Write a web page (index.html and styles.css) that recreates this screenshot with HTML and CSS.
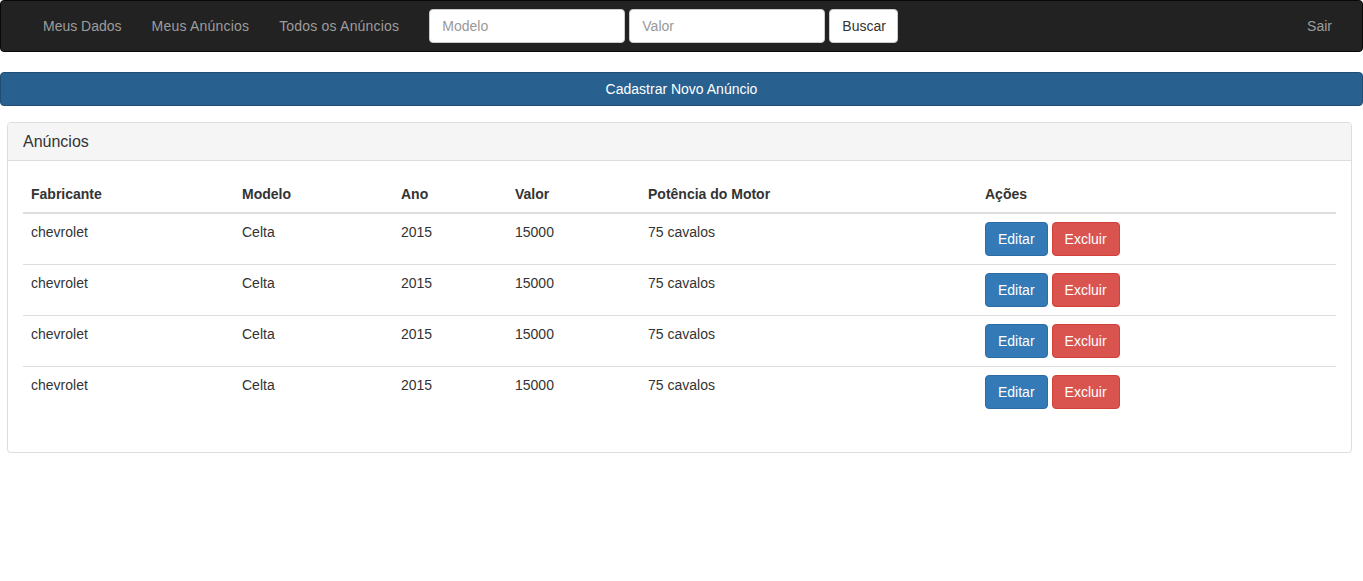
FILE: index.html
```html
<!DOCTYPE html>
<html lang="pt">
<head>
<meta charset="utf-8">
<title>Anúncios</title>
<link rel="stylesheet" href="styles.css">
</head>
<body>
<nav class="navbar">
  <ul class="nav-links">
    <li><a href="#">Meus Dados</a></li>
    <li><a href="#">Meus Anúncios</a></li>
    <li><a href="#">Todos os Anúncios</a></li>
  </ul>
  <form class="nav-search">
    <input class="field" type="text" placeholder="Modelo">
    <input class="field" type="text" placeholder="Valor">
    <button class="btn btn-default" type="button">Buscar</button>
  </form>
  <a class="nav-right" href="#">Sair</a>
</nav>

<button class="btn btn-wide" type="button">Cadastrar Novo Anúncio</button>

<section class="panel">
  <div class="panel-heading">Anúncios</div>
  <div class="panel-body">
    <table class="table">
      <colgroup>
        <col class="c1"><col class="c2"><col class="c3"><col class="c4"><col class="c5"><col class="c6">
      </colgroup>
      <thead>
        <tr><th>Fabricante</th><th>Modelo</th><th>Ano</th><th>Valor</th><th>Potência do Motor</th><th>Ações</th></tr>
      </thead>
      <tbody>
        <tr><td>chevrolet</td><td>Celta</td><td>2015</td><td>15000</td><td>75 cavalos</td><td class="actions"><button class="btn btn-primary">Editar</button><button class="btn btn-danger">Excluir</button></td></tr>
        <tr><td>chevrolet</td><td>Celta</td><td>2015</td><td>15000</td><td>75 cavalos</td><td class="actions"><button class="btn btn-primary">Editar</button><button class="btn btn-danger">Excluir</button></td></tr>
        <tr><td>chevrolet</td><td>Celta</td><td>2015</td><td>15000</td><td>75 cavalos</td><td class="actions"><button class="btn btn-primary">Editar</button><button class="btn btn-danger">Excluir</button></td></tr>
        <tr><td>chevrolet</td><td>Celta</td><td>2015</td><td>15000</td><td>75 cavalos</td><td class="actions"><button class="btn btn-primary">Editar</button><button class="btn btn-danger">Excluir</button></td></tr>
      </tbody>
    </table>
  </div>
</section>
</body>
</html>
```

FILE: styles.css
```css
* { box-sizing: border-box; }
html, body {
  margin: 0;
  padding: 0;
  background: #fff;
  font-family: "Liberation Sans", Arial, Helvetica, sans-serif;
  font-size: 14px;
  line-height: 20px;
  color: #333;
}
.navbar {
  display: flex;
  align-items: center;
  height: 52px;
  background: #222;
  border: 1px solid #080808;
  border-radius: 4px;
  margin-bottom: 20px;
  padding: 0 15px 0 27px;
}
.nav-links {
  display: flex;
  list-style: none;
  margin: 0;
  padding: 0;
}
.nav-links a, .nav-right {
  display: block;
  padding: 15px;
  color: #9d9d9d;
  text-decoration: none;
}
.nav-links li + li a { letter-spacing: 0.2px; }
.nav-search {
  display: flex;
  gap: 4px;
  margin-left: 15px;
}
.field {
  width: 196px;
  height: 34px;
  padding: 6px 12px;
  font: 14px/20px "Liberation Sans", Arial, sans-serif;
  color: #555;
  background: #fff;
  border: 1px solid #ccc;
  border-radius: 4px;
}
.field::placeholder { color: #999; }
.nav-right { margin-left: auto; }
.btn {
  display: inline-block;
  height: 34px;
  padding: 6px 12px;
  font: 14px/20px "Liberation Sans", Arial, sans-serif;
  border: 1px solid transparent;
  border-radius: 4px;
  cursor: pointer;
}
.btn-default {
  background: #fff;
  border-color: #ccc;
  color: #333;
  width: 69px;
}
.btn-wide {
  display: block;
  width: 100%;
  background: #286090;
  border-color: #204d74;
  color: #fff;
  margin-bottom: 16px;
}
.btn-primary {
  background: #337ab7;
  border-color: #2e6da4;
  color: #fff;
}
.btn-danger {
  background: #d9534f;
  border-color: #d43f3a;
  color: #fff;
}
.actions .btn + .btn { margin-left: 4px; }
.panel {
  margin: 0 11px 0 7px;
  border: 1px solid #ddd;
  border-radius: 4px;
  box-shadow: 0 1px 1px rgba(0,0,0,.05);
}
.panel-heading {
  background: #f5f5f5;
  border-bottom: 1px solid #ddd;
  border-radius: 3px 3px 0 0;
  padding: 10px 15px 9px;
  font-size: 16px;
  line-height: 18px;
  color: #333;
}
.panel-body { padding: 15px; }
.table {
  width: 100%;
  border-collapse: collapse;
  border-spacing: 0;
  margin-bottom: 20px;
  table-layout: fixed;
}
.c1 { width: 211px; }
.c2 { width: 159px; }
.c3 { width: 114px; }
.c4 { width: 133px; }
.c5 { width: 337px; }
.c6 { width: auto; }
.table th, .table td {
  padding: 8px;
  text-align: left;
  vertical-align: top;
  line-height: 20px;
}
.table th {
  font-weight: bold;
  vertical-align: bottom;
  border-bottom: 2px solid #ddd;
}
.table tbody tr + tr td { border-top: 1px solid #ddd; }
```
